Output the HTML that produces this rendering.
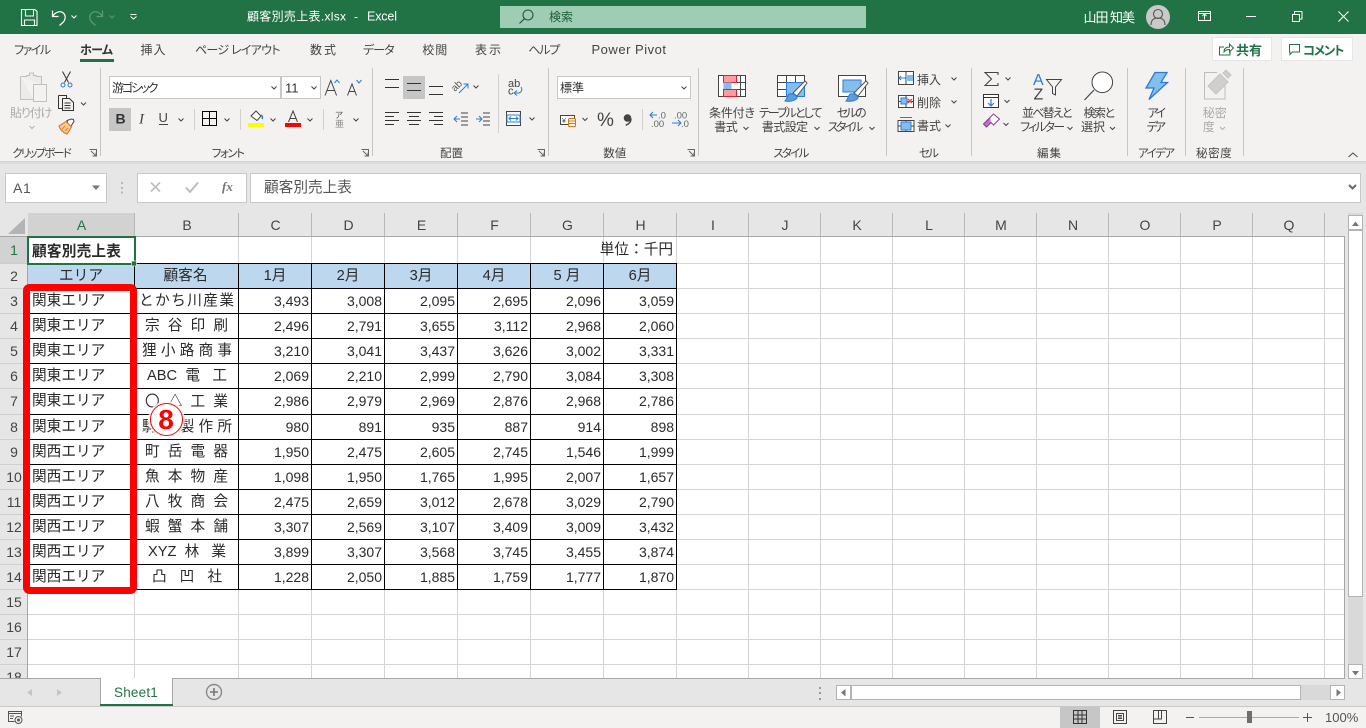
<!DOCTYPE html>
<html lang="ja"><head><meta charset="utf-8"><title>顧客別売上表.xlsx - Excel</title>
<style>
html,body{margin:0;padding:0;width:1366px;height:728px;overflow:hidden;background:#e6e6e6}
body{position:relative;font-family:"Liberation Sans","Noto Sans CJK JP",sans-serif;color:#222}
svg{position:absolute;left:0;top:0;display:block}
svg text{font-family:"Liberation Sans","Noto Sans CJK JP",sans-serif;font-size:12px;fill:#444;font-feature-settings:"palt"}
table{position:absolute;left:28px;top:237px;width:649px;border-collapse:separate;border-spacing:0;table-layout:fixed}
td{padding:0 3px 2px 4px;font-size:14px;line-height:22px;white-space:nowrap;overflow:hidden;color:#2a2a2a;text-align:right;box-sizing:border-box}
td.j{font-size:14.67px;text-align:left}
td.h{font-size:14.67px;text-align:center;padding-left:3px;padding-right:4px}
td.d{font-size:14.67px;text-align:justify;text-align-last:justify;padding-left:10px;padding-right:11px;text-justify:inter-character}
.ch{position:absolute;top:215px;height:21px;line-height:21px;text-align:center;font-size:14px;color:#444}
.rh{position:absolute;left:0;width:28px;text-align:center;font-size:14px;line-height:25px;height:25px;color:#444}
</style></head><body>

<svg width="1366" height="728" viewBox="0 0 1366 728">
<rect x="0" y="0" width="1366" height="34" fill="#217346"/>
<rect x="0" y="34" width="1366" height="127" fill="#f3f2f1"/>
<rect x="0" y="161" width="1366" height="1" fill="#d2d2d2"/>
<rect x="0" y="162" width="1366" height="2" fill="#dcdcdc"/>
<rect x="28" y="237" width="1317" height="441" fill="#fff"/>
<path d="M134.500 237V678M238.500 237V678M311.500 237V678M384.500 237V678M457.500 237V678M530.500 237V678M603.500 237V678M676.500 237V678M748.500 237V678M820.500 237V678M892.500 237V678M964.500 237V678M1036.500 237V678M1108.500 237V678M1180.500 237V678M1252.500 237V678M1324.500 237V678" stroke="#d4d4d4" fill="none"/>
<path d="M28 263.500H1345M28 288.500H1345M28 313.500H1345M28 338.500H1345M28 363.500H1345M28 388.500H1345M28 414.500H1345M28 439.500H1345M28 464.500H1345M28 489.500H1345M28 514.500H1345M28 539.500H1345M28 564.500H1345M28 589.500H1345M28 614.500H1345M28 639.500H1345M28 664.500H1345" stroke="#d4d4d4" fill="none"/>
<rect x="28" y="264" width="649" height="24" fill="#bdd7ee"/>
<path d="M134.500 263V590M238.500 263V590M311.500 263V590M384.500 263V590M457.500 263V590M530.500 263V590M603.500 263V590M676.500 263V590" stroke="#000" fill="none"/>
<path d="M134 263.500H677M28 288.500H677M28 313.500H677M28 338.500H677M28 363.500H677M28 388.500H677M28 414.500H677M28 439.500H677M28 464.500H677M28 489.500H677M28 514.500H677M28 539.500H677M28 564.500H677M28 589.500H677" stroke="#000" fill="none"/>

<!-- headers -->
<rect x="0" y="213" width="1345" height="24" fill="#e6e6e6"/>
<rect x="28" y="213" width="107" height="23" fill="#d2d2d2"/>
<rect x="0" y="237" width="28" height="441" fill="#e6e6e6"/>
<rect x="0" y="237" width="27" height="27" fill="#d2d2d2"/>
<path d="M0 236.500H1345" stroke="#a6a6a6"/>
<path d="M27.500 237V678M1344.500 237V678" stroke="#a6a6a6"/>
<path d="M8 234L25 218V234Z" fill="#b4b4b4"/>
<path d="M134.500 213V236M238.500 213V236M311.500 213V236M384.500 213V236M457.500 213V236M530.500 213V236M603.500 213V236M676.500 213V236M748.500 213V236M820.500 213V236M892.500 213V236M964.500 213V236M1036.500 213V236M1108.500 213V236M1180.500 213V236M1252.500 213V236M1324.500 213V236" stroke="#b8b8b8" fill="none"/>
<path d="M0 263.500H27M0 288.500H27M0 313.500H27M0 338.500H27M0 363.500H27M0 388.500H27M0 414.500H27M0 439.500H27M0 464.500H27M0 489.500H27M0 514.500H27M0 539.500H27M0 564.500H27M0 589.500H27M0 614.500H27M0 639.500H27M0 664.500H27" stroke="#cfcfcf" fill="none"/>

<!-- bottom bars -->
<rect x="0" y="678" width="1366" height="28" fill="#e6e6e6"/>
<path d="M0 678.500H1345" stroke="#a6a6a6"/>
<rect x="100" y="678" width="73" height="28" fill="#fff"/>
<path d="M100.500 678V704M172.500 678V704" stroke="#a6a6a6" fill="none"/>
<rect x="100" y="704" width="73" height="2" fill="#217346"/>
<rect x="0" y="706" width="1366" height="1" fill="#c8c8c8"/>
<rect x="0" y="707" width="1366" height="21" fill="#f3f2f1"/>
<rect x="1060" y="707" width="40" height="21" fill="#c6c6c6"/>

<!-- vertical scrollbar -->
<rect x="1348" y="213" width="15" height="466" fill="#d9d9d9"/>
<rect x="1348.500" y="215.500" width="14" height="14" fill="#fff" stroke="#b4b4b4"/>
<rect x="1348.500" y="230.500" width="14" height="366" fill="#fff" stroke="#b4b4b4"/>
<rect x="1348.500" y="664.500" width="14" height="14" fill="#fff" stroke="#b4b4b4"/>
<path d="M1352 226L1355.500 221.500L1359 226ZM1352 671L1355.500 675.500L1359 671Z" fill="#777"/>
<!-- horizontal scrollbar -->
<rect x="836" y="685" width="509" height="15" fill="#d9d9d9"/>
<rect x="836.500" y="685.500" width="14" height="14" fill="#fff" stroke="#b4b4b4"/>
<rect x="851.500" y="685.500" width="449" height="14" fill="#fff" stroke="#b4b4b4"/>
<rect x="1330.500" y="685.500" width="14" height="14" fill="#fff" stroke="#b4b4b4"/>
<path d="M845.500 689V696.500L841 692.500ZM1336.500 689V696.500L1341 692.500Z" fill="#777"/>
<path d="M820 687v2M820 692v2M820 698v2" stroke="#999" stroke-width="2"/>
<path d="M32 689V696L27 692.500ZM57 689V696L62 692.500Z" fill="#c4c4c4"/>
<circle cx="214" cy="692" r="7.500" fill="none" stroke="#8a8a8a" stroke-width="1.400"/>
<path d="M214 688v8M210 692h8" stroke="#777" stroke-width="1.600"/>

<!-- status bar icons -->
<path d="M8.500 711.500h13v2h-13zM8.500 713.500v8h6M21.500 713.500v3M10 716h4M10 718.500h3" fill="none" stroke="#555"/>
<circle cx="18.500" cy="720" r="3.500" fill="none" stroke="#555"/><circle cx="18.500" cy="720" r="1.500" fill="#555"/>
<path d="M1073.500 710.500h13v13h-13zM1078 710.500v13M1082 710.500v13M1073.500 715h13M1073.500 719h13" fill="none" stroke="#333"/>
<path d="M1113.500 710.500h13v13h-13zM1116.500 713.500h7v7h-7zM1118 715.500h4M1118 717h4M1118 718.500h4" fill="none" stroke="#444"/>
<path d="M1153.500 710.500h13v13h-13zM1153.500 719h8v-8.500" fill="none" stroke="#444"/><path d="M1158.500 710.500v8" stroke="#444"/>
<path d="M1186 717.500h8M1303 717.500h9M1307.500 713v9" stroke="#555" fill="none"/>
<path d="M1199 717.500h100" stroke="#aaa"/>
<rect x="1247" y="711" width="5" height="12" fill="#6f6f6f"/>

<!-- formula bar -->
<rect x="5.500" y="173.500" width="101" height="29" fill="#fff" stroke="#c8c8c8"/>
<path d="M92 185.500h8l-4 4.500z" fill="#777"/>
<path d="M122 182v2M122 187v2M122 191.500v2" stroke="#aaa" stroke-width="1.500"/>
<rect x="137.500" y="173.500" width="109" height="29" fill="#fff" stroke="#c8c8c8"/>
<rect x="250.500" y="173.500" width="1110" height="29" fill="#fff" stroke="#c8c8c8"/>
<path d="M151 182.500l9 9M160 182.500l-9 9" stroke="#bdbdbd" stroke-width="1.600" fill="none"/>
<path d="M186 187.500l4 4.500l8-9.500" stroke="#bdbdbd" stroke-width="2" fill="none"/>
<text x="222" y="191" style="font-family:'Liberation Serif',serif;font-style:italic;font-weight:bold;font-size:13px;fill:#777">fx</text>
<path d="M1349 185l3.500 3.500l3.500-3.500" stroke="#666" stroke-width="2" fill="none"/>
<text x="13" y="193" style="font-size:14px;fill:#555;letter-spacing:.6px">A1</text>
<text x="264" y="192" style="font-size:14.67px;fill:#555;font-feature-settings:normal">顧客別売上表</text>

<!-- Title bar -->
<path d="M21.500 9.500h13.500l2 2v14h-15.500zM25.500 9.500v6.500h8v-6.500M24.500 25.500v-5.500h10v5.500" fill="none" stroke="#fff" stroke-width="1.100"/>
<path d="M52.500 10.500v6h6M52.800 16c3-4.500 8-5.500 10.700-2.800c3 3 1.500 7.300-.7 9.300l-3.300 3" fill="none" stroke="#fff" stroke-width="1.200"/>
<path d="M71.500 15.500l2.500 2.500l2.500-2.500" fill="none" stroke="#fff"/>
<path d="M102.500 10.500v6h-6M102.200 16c-3-4.500-8-5.500-10.700-2.800c-3 3-1.500 7.300.7 9.300l3.300 3" fill="none" stroke="#5f9a78" stroke-width="1.200"/>
<path d="M109.500 15.500l2.500 2.500l2.500-2.500" fill="none" stroke="#5f9a78"/>
<path d="M130.500 14.500h6M130.500 16.500l3 2.500l3-2.500" fill="none" stroke="#fff"/>
<text x="247" y="20.500" style="fill:#fff;font-feature-settings:normal" textLength="99">顧客別売上表.xlsx</text>
<text x="354" y="20.500" style="fill:#fff">-</text>
<text x="367" y="20.500" style="fill:#fff;font-size:12.500px" textLength="30">Excel</text>
<rect x="500" y="6" width="366" height="22" fill="#9fcdb3"/>
<circle cx="528" cy="15" r="5" fill="none" stroke="#1d5c3b" stroke-width="1.100"/>
<path d="M524.300 18.800l-4.800 4.700" stroke="#1d5c3b" stroke-width="1.200"/>
<text x="549" y="21" style="fill:#1d5c3b;font-feature-settings:normal">検索</text>
<text x="1083.500" y="22" style="fill:#fff;font-size:13px;font-feature-settings:normal" textLength="51.500">山田 知美</text>
<circle cx="1158" cy="17" r="12" fill="#c9c9c9"/>
<circle cx="1158" cy="14" r="4.500" fill="none" stroke="#555" stroke-width="1.100"/>
<path d="M1151 25c0-5 3-7 7-7s7 2 7 7" fill="none" stroke="#555" stroke-width="1.100"/>
<path d="M1198.500 11.500h12v9h-12zM1198.500 13.500h12M1204.500 19.500v-5M1202.500 16l2-2l2 2" fill="none" stroke="#fff"/>
<path d="M1246 16.500h10" stroke="#fff"/>
<path d="M1292.500 14.500h7v7h-7zM1294.500 14v-2.500h7.500v7.500h-2.500" fill="none" stroke="#fff"/>
<path d="M1338.500 11.500l10 10M1348.500 11.500l-10 10" stroke="#fff" fill="none" stroke-width="1.100"/>

<!-- tabs -->
<text x="14" y="54" textLength="37">ファイル</text>
<text x="80" y="54" style="font-weight:bold;fill:#333" textLength="33">ホーム</text>
<rect x="80" y="59" width="34" height="3" fill="#217346"/>
<text x="140.500" y="54" textLength="25">挿入</text>
<text x="195" y="54" textLength="85.500">ページ レイアウト</text>
<text x="310" y="54" textLength="26">数式</text>
<text x="363" y="54" textLength="31.500">データ</text>
<text x="422.300" y="54" textLength="25">校閲</text>
<text x="475" y="54" textLength="26">表示</text>
<text x="528.300" y="54" textLength="32">ヘルプ</text>
<text x="591.500" y="54" style="font-size:13px" textLength="74.500">Power Pivot</text>
<rect x="1212.500" y="37.500" width="59" height="23" fill="#fff" stroke="#e6e6e6"/>
<path d="M1224 47h-4.500v8h10.500v-3" fill="none" stroke="#217346"/>
<path d="M1224 52c0-3.500 2-5 5.500-5v-3l4 4l-4 4v-2.500c-2.500 0-4 .5-5.500 2.500z" fill="none" stroke="#217346"/>
<text x="1236" y="55" style="font-weight:bold;font-size:13px;fill:#217346;font-feature-settings:normal">共有</text>
<rect x="1281.500" y="37.500" width="71" height="23" fill="#fff" stroke="#e6e6e6"/>
<path d="M1289.500 44.500h10v7.500h-7l-2.500 2.500v-2.500h-.5z" fill="none" stroke="#217346"/>
<text x="1303" y="55" style="font-weight:bold;font-size:12.500px;fill:#217346" textLength="41.500">コメント</text>

<!-- dividers -->
<path d="M100.500 68V156M372.500 68V156M548.500 68V156M698.500 68V156M886.500 68V156M971.500 68V156M1127.500 68V156M1185.500 68V156M1243.500 68V156" stroke="#c6c6c6" fill="none"/>
<path d="M194.500 109V130M240.500 109V130M323.500 109V130M498.500 74V133M642.500 109V130" stroke="#d0d0d0" fill="none"/>

<!-- clipboard -->
<path d="M20.500 76.500h6v-1h3v-2.500h4v2.500h3v1h5v8" fill="#ebebeb" stroke="#c0c0c0"/>
<path d="M20.500 76.500v23h13" fill="#ebebeb" stroke="#c0c0c0"/>
<rect x="33.500" y="84.500" width="13" height="17" fill="#f3f2f1" stroke="#c0c0c0"/>
<text x="10" y="117" style="fill:#ababab" textLength="42.300">貼り付け</text>
<path d="M29.500 126l2.500 2.500l2.500-2.500" stroke="#b0b0b0" fill="none"/>
<path d="M62.500 71.500l6 11M70.500 71.500l-6 11" stroke="#333" fill="none"/>
<circle cx="63" cy="85" r="2" fill="none" stroke="#2b7cd3"/><circle cx="70" cy="85" r="2" fill="none" stroke="#2b7cd3"/>
<path d="M58.500 95.500h8v3M58.500 95.500v13h4" fill="none" stroke="#333"/>
<path d="M62.500 98.500h7l4 4v8h-11zM64.500 103h6M64.500 105.500h6M64.500 108h6" fill="none" stroke="#333"/>
<path d="M81 102.500l2.500 2.500l2.500-2.500" stroke="#444" fill="none"/>
<path d="M67 120.500l4.500-1.500l2 .5l.5 2l-3 4.500l-2 .5z" fill="#fff" stroke="#444"/>
<path d="M59 126l7-4.500l5.500 5.500l-4.500 7c-3-1-7-4-8-8z" fill="#f7c9a0" stroke="#e67e22" stroke-width="1.200"/>
<path d="M62 129l3-3M65 131l3-3" stroke="#e67e22" fill="none"/>
<text x="12.300" y="157" style="font-size:11.500px" textLength="59.500">クリップボード</text>
<path d="M89.500 149.500h7v7M91 151l5 5M96 152.500v3.500h-3.500" stroke="#666" fill="none"/>

<!-- font group -->
<rect x="109.500" y="76.500" width="171" height="22" fill="#fff" stroke="#c6c6c6"/>
<rect x="281.500" y="76.500" width="39" height="22" fill="#fff" stroke="#c6c6c6"/>
<text x="112" y="92" style="fill:#333" textLength="46.500">游ゴシック</text>
<text x="285" y="92.500" style="fill:#333;font-size:13px">11</text>
<path d="M271.500 86.500l2.500 2.500l2.500-2.500M311.500 86.500l2.500 2.500l2.500-2.500" stroke="#444" fill="none"/>
<path d="M325 95.500l5.800-15l5.800 15M327 90.500h7.500" fill="none" stroke="#444"/>
<path d="M334.500 83l2.500-3l2.500 3" fill="none" stroke="#2b7cd3"/>
<path d="M347.500 95.500l4.500-11.500l4.500 11.500M349 91.500h6" fill="none" stroke="#444"/>
<path d="M356.500 80l2.500 3l2.500-3" fill="none" stroke="#2b7cd3"/>
<rect x="109" y="108" width="22" height="23" fill="#c6c6c6"/>
<text x="115.500" y="123.500" style="font-weight:bold;font-size:14px;fill:#333">B</text>
<text x="139" y="123.500" style="font-style:italic;font-family:'Liberation Serif',serif;font-size:15px;fill:#444">I</text>
<text x="158.500" y="122" style="font-size:13px;fill:#444">U</text>
<path d="M159 124.500h9" stroke="#444"/>
<path d="M178.500 118.500l2.500 2.500l2.500-2.500M224.500 118.500l2.500 2.500l2.500-2.500M270.500 118.500l2.500 2.500l2.500-2.500M307.500 118.500l2.500 2.500l2.500-2.500M353.500 118.500l2.500 2.500l2.500-2.500" stroke="#444" fill="none"/>
<path d="M202.500 111.500h14v14h-14zM209.500 111.500v14M202.500 118.500h14" fill="none" stroke="#000"/>
<path d="M251 116l5-5l5 5l-4 4.500z" fill="#fff" stroke="#444"/>
<path d="M261 115c1.500 1 2 2.500 1 4" fill="none" stroke="#2b7cd3" stroke-width="1.500"/>
<rect x="248" y="123" width="16" height="4" fill="#ff0"/>
<path d="M288.500 122l4.500-11l4.500 11M290 118.500h6" fill="none" stroke="#444"/>
<rect x="285" y="123" width="16" height="4" fill="#f00"/>
<text x="335" y="118" style="font-size:8.500px;fill:#555">ア</text>
<text x="335" y="127" style="font-size:9px;fill:#888;font-feature-settings:normal">亜</text>
<text x="211.700" y="157" style="font-size:11.500px" textLength="33.300">フォント</text>
<path d="M361.500 149.500h7v7M363 151l5 5M368 152.500v3.500h-3.500" stroke="#666" fill="none"/>

<!-- alignment -->
<rect x="403" y="76" width="22" height="23" fill="#c6c6c6"/>
<path d="M385 79.500h14M385 87.500h14M407 83.500h14M407 90.500h14M429 86.500h14M429 94.500h14" stroke="#333" fill="none"/>
<text x="0" y="0" transform="translate(455 92) rotate(-45)" style="font-size:10px;fill:#555">ab</text>
<path d="M459 93l9-9M468 88.500v-4.500h-4.500" stroke="#2b7cd3" fill="none"/>
<path d="M473.500 85.500l2.500 2.500l2.500-2.500" stroke="#444" fill="none"/>
<path d="M385 112.500h14M385 116.500h9M385 120.500h14M385 124.500h9M407 112.500h14M409 116.500h10M407 120.500h14M409 124.500h10M429 112.500h14M434 116.500h9M429 120.500h14M434 124.500h9" stroke="#333" fill="none"/>
<path d="M461 113h7M461 117h7M461 121h7M461 125h7M483 113h7M483 117h7M483 121h7M483 125h7" stroke="#444" fill="none"/>
<path d="M454 119h6M457 116l-3 3l3 3M476 119h6M479 116l3 3l-3 3" stroke="#2b7cd3" fill="none"/>
<text x="508" y="87" style="font-size:11px">ab</text>
<text x="508" y="94.500" style="font-size:11px">c</text>
<path d="M521 87c2 3 0 6-3 6h-4M517 90.500l-3 2.500l3 2.500" stroke="#2b7cd3" fill="none"/>
<rect x="506.500" y="111.500" width="14" height="14" fill="#fff" stroke="#444"/>
<rect x="507" y="115" width="13" height="7" fill="#fff" stroke="#2b7cd3"/>
<path d="M509 118.500h9M511 116.500l-2 2l2 2M516 116.500l2 2l-2 2" stroke="#2b7cd3" fill="none"/>
<path d="M529.500 117.500l2.500 2.500l2.500-2.500" stroke="#444" fill="none"/>
<text x="440" y="157" style="font-size:11.500px">配置</text>
<path d="M537.500 149.500h7v7M539 151l5 5M544 152.500v3.500h-3.500" stroke="#666" fill="none"/>

<!-- number -->
<rect x="557.500" y="76.500" width="133" height="22" fill="#fff" stroke="#c6c6c6"/>
<text x="560" y="92" style="fill:#333">標準</text>
<path d="M681.500 86.500l2.500 2.500l2.500-2.500M582.500 118l2.500 2.500l2.500-2.500" stroke="#444" fill="none"/>
<rect x="560.500" y="115.500" width="14" height="9" fill="#fff" stroke="#444"/>
<text x="562" y="123" style="font-size:7px">¥</text>
<rect x="568.500" y="118.500" width="7" height="8" rx="1" fill="#fff" stroke="#d9730d"/>
<path d="M568.500 121h7M568.500 123.500h7" stroke="#d9730d"/>
<text x="597" y="126" style="font-size:19px;fill:#444">%</text>
<circle cx="627.500" cy="118" r="3.800" fill="#444"/>
<path d="M630.800 118.500c.4 3-1.800 5.500-5 6.700" fill="none" stroke="#444" stroke-width="1.600"/>
<path d="M657 115h-7M653 112l-3 3l3 3" stroke="#2b7cd3" fill="none"/>
<text x="651" y="127" style="font-size:9.500px;fill:#666">.00</text>
<text x="658" y="118.500" style="font-size:9.500px;fill:#666">.0</text>
<text x="674" y="118.500" style="font-size:9.500px;fill:#666">.00</text>
<path d="M672 123h9M678 120l3 3l-3 3" stroke="#2b7cd3" fill="none"/>
<text x="681" y="127" style="font-size:9.500px;fill:#666">.0</text>
<text x="603.300" y="157" style="font-size:11.500px">数値</text>
<path d="M687.500 149.500h7v7M689 151l5 5M694 152.500v3.500h-3.500" stroke="#666" fill="none"/>

<!-- styles -->
<rect x="718.500" y="75.500" width="27" height="21" fill="#fff" stroke="#444"/>
<rect x="723.500" y="75.500" width="13" height="7" fill="#ff9b9e" stroke="#d9232c"/>
<rect x="723.500" y="82.500" width="8" height="7" fill="#83beec"/>
<rect x="723.500" y="89.500" width="13" height="7" fill="#ff9b9e" stroke="#d9232c"/>
<path d="M737 82.500h9M737 89.500h9M740.500 75.500v21" stroke="#444" fill="none"/>
<rect x="777.500" y="75.500" width="27" height="21" fill="#fff" stroke="#444"/>
<path d="M777.500 82.500h27M777.500 89.500h27M786.500 75.500v21M795.500 75.500v21" stroke="#444" fill="none"/>
<rect x="786.500" y="82.500" width="18" height="14" fill="#83beec" stroke="#2b7cd3"/>
<path d="M793 93L805 81l2 2L797 96z" fill="#fff" stroke="#555"/>
<path d="M789 94c3-1 8 1 8 4c-2 3-8 4-12 3c2-2 2-5 4-7z" fill="#5a9fdc" stroke="#2b7cd3"/>
<rect x="838.500" y="75.500" width="27" height="21" fill="#fff" stroke="#444"/>
<rect x="843" y="80" width="18" height="12" fill="#83beec" stroke="#2b7cd3"/>
<path d="M854 93L866 81l2 2L858 96z" fill="#fff" stroke="#555"/>
<path d="M850 94c3-1 8 1 8 4c-2 3-8 4-12 3c2-2 2-5 4-7z" fill="#5a9fdc" stroke="#2b7cd3"/>
<text x="709" y="117" textLength="46">条件付き</text>
<text x="714.300" y="131" textLength="23.500">書式</text>
<path d="M743.500 127l2.500 2.500l2.500-2.500" stroke="#444" fill="none"/>
<text x="759" y="117" textLength="63.500">テーブルとして</text>
<text x="761.700" y="131" textLength="46.500">書式設定</text>
<path d="M814.500 127l2.500 2.500l2.500-2.500" stroke="#444" fill="none"/>
<text x="836.700" y="117" textLength="30">セルの</text>
<text x="827.700" y="131" textLength="35.500">スタイル</text>
<path d="M869.500 127l2.500 2.500l2.500-2.500" stroke="#444" fill="none"/>
<text x="773.300" y="157" style="font-size:11.500px" textLength="36">スタイル</text>

<!-- cells -->
<path d="M898.500 71.500h15v13h-15zM898.500 78h15M906 71.500v13" fill="#fff" stroke="#444"/>
<rect x="906" y="75" width="7" height="6" fill="#83beec"/>
<path d="M899 78h6M901 76l-2 2l2 2" stroke="#2b7cd3" fill="none"/>
<path d="M898.500 95.500h15v12h-15zM898.500 101.500h15M906 95.500v12" fill="#fff" stroke="#444"/>
<rect x="901" y="98" width="6" height="6" fill="#83beec" stroke="#2b7cd3"/>
<path d="M908 99l4 4M912 99l-4 4" stroke="#e8474a" stroke-width="1.300"/>
<path d="M898 120.500h16v11h-16zM898 126h16M906 120.500v11" fill="#fff" stroke="#444"/>
<rect x="901" y="122" width="10" height="8" fill="#83beec" stroke="#2b7cd3"/>
<path d="M900 117.500h12" stroke="#2b7cd3"/>
<text x="917" y="84" style="font-feature-settings:normal">挿入</text>
<text x="917" y="107" style="font-feature-settings:normal">削除</text>
<text x="917" y="130" style="font-feature-settings:normal">書式</text>
<path d="M951.500 77.500l2.500 2.500l2.500-2.500M951.500 100.500l2.500 2.500l2.500-2.500M945.500 124.500l2.500 2.500l2.500-2.500" stroke="#444" fill="none"/>
<text x="919" y="157" style="font-size:11.500px" textLength="20">セル</text>

<!-- editing -->
<path d="M998 75v-2.500h-13l6.500 6.500l-6.500 6.500h13v-2.500" fill="none" stroke="#444" stroke-width="1.100"/>
<path d="M1005.500 77.500l2.500 2.500l2.500-2.500M1004.500 100l2.500 2.500l2.500-2.500M1003.500 123l2.500 2.500l2.500-2.500" stroke="#444" fill="none"/>
<rect x="983.500" y="94.500" width="15" height="13" fill="#fff" stroke="#333"/>
<path d="M983.500 97.500h15" stroke="#333"/>
<path d="M991 99v7M988 103l3 3l3-3" stroke="#2b7cd3" fill="none" stroke-width="1.200"/>
<path d="M983.500 124l7-7l3 3l-7 7z" fill="#c46fc9" stroke="#8b3a91"/>
<path d="M990.500 117l3-3l6 5l-6 6l-3-3" fill="#fff" stroke="#8b3a91"/>
<text x="1033" y="85" style="font-size:16px;fill:#2b7cd3">A</text>
<text x="1033.500" y="99.500" style="font-size:16px;fill:#444">Z</text>
<path d="M1046.500 79.500h15l-6 7.500v8l-3-1.500v-6.500z" fill="none" stroke="#444"/>
<text x="1022" y="117" textLength="50.500">並べ替えと</text>
<text x="1020" y="131" textLength="45">フィルター</text>
<path d="M1067.500 127l2.500 2.500l2.500-2.500" stroke="#444" fill="none"/>
<circle cx="1102.300" cy="82.300" r="10.300" fill="#fff" stroke="#444"/>
<path d="M1094 90l-9.500 10" stroke="#444" stroke-width="1.200"/>
<text x="1083.500" y="117" textLength="31.500">検索と</text>
<text x="1081" y="131" textLength="24">選択</text>
<path d="M1110 127l2.500 2.500l2.500-2.500" stroke="#444" fill="none"/>
<text x="1037" y="157" style="font-size:11.500px" textLength="24">編集</text>

<!-- ideas -->
<path d="M1155 72.500h12l-6 10h6.500l-18.500 17l5-11.500h-8z" fill="#83beec" stroke="#2b7cd3" stroke-width="1.300"/>
<text x="1147.500" y="117" textLength="18.500">アイ</text>
<text x="1146.700" y="131" textLength="19.300">デア</text>
<text x="1138" y="157" style="font-size:11.500px" textLength="37">アイデア</text>

<!-- sensitivity -->
<path d="M1217 72.500h-12.500v26.500h20.500v-14" fill="none" stroke="#bcbcbc"/>
<path d="M1208 86l12-12l8 8l-12 12z" fill="#cfcfcf" stroke="#c4c4c4"/>
<path d="M1223 73l3-3l5 5l-3 3z" fill="#cfcfcf" stroke="#c4c4c4"/>
<text x="1202.700" y="117" style="fill:#ababab;font-feature-settings:normal">秘密</text>
<text x="1202.700" y="131" style="fill:#ababab;font-feature-settings:normal">度</text>
<path d="M1220 127l2.500 2.500l2.500-2.500" stroke="#b0b0b0" fill="none"/>
<text x="1196" y="157" style="font-size:11.500px;font-feature-settings:normal" textLength="35.700">秘密度</text>
<path d="M1348.500 157l4.500-4l4.500 4" stroke="#555" stroke-width="1.100" fill="none"/>

<text x="114" y="697" style="font-size:13.500px;fill:#217346;letter-spacing:.2px">Sheet1</text>
<text x="1325" y="722" style="font-size:13px;fill:#555">100%</text>
</svg>

<div class="ch" style="left:28px;width:107px;color:#217346">A</div>
<div class="ch" style="left:135px;width:104px">B</div>
<div class="ch" style="left:239px;width:73px">C</div>
<div class="ch" style="left:312px;width:73px">D</div>
<div class="ch" style="left:385px;width:73px">E</div>
<div class="ch" style="left:458px;width:73px">F</div>
<div class="ch" style="left:531px;width:73px">G</div>
<div class="ch" style="left:604px;width:73px">H</div>
<div class="ch" style="left:677px;width:72px">I</div>
<div class="ch" style="left:749px;width:72px">J</div>
<div class="ch" style="left:821px;width:72px">K</div>
<div class="ch" style="left:893px;width:72px">L</div>
<div class="ch" style="left:965px;width:72px">M</div>
<div class="ch" style="left:1037px;width:72px">N</div>
<div class="ch" style="left:1109px;width:72px">O</div>
<div class="ch" style="left:1181px;width:72px">P</div>
<div class="ch" style="left:1253px;width:72px">Q</div>

<div class="rh" style="top:238px;color:#217346">1</div>
<div class="rh" style="top:264px">2</div>
<div class="rh" style="top:289px">3</div>
<div class="rh" style="top:314px">4</div>
<div class="rh" style="top:339px">5</div>
<div class="rh" style="top:364px">6</div>
<div class="rh" style="top:389px">7</div>
<div class="rh" style="top:415px">8</div>
<div class="rh" style="top:440px">9</div>
<div class="rh" style="top:465px">10</div>
<div class="rh" style="top:490px">11</div>
<div class="rh" style="top:515px">12</div>
<div class="rh" style="top:540px">13</div>
<div class="rh" style="top:565px">14</div>
<div class="rh" style="top:590px">15</div>
<div class="rh" style="top:615px">16</div>
<div class="rh" style="top:640px">17</div>
<div class="rh" style="top:665px;height:13px;overflow:hidden">18</div>

<table>
<colgroup><col style="width:107px"><col style="width:104px"><col style="width:73px"><col style="width:73px"><col style="width:73px"><col style="width:73px"><col style="width:73px"><col style="width:73px"></colgroup>
<tr style="height:27px"><td class="j" style="font-weight:bold;overflow:visible;padding-top:2px;padding-bottom:0;letter-spacing:.2px">顧客別売上表</td><td></td><td></td><td></td><td></td><td></td><td colspan="2" class="j" style="text-align:right;padding-bottom:1px;padding-right:4px">単位：千円</td></tr>
<tr style="height:25px"><td class="h">エリア</td><td class="h" style="padding-right:6px">顧客名</td><td class="h">1月</td><td class="h">2月</td><td class="h">3月</td><td class="h">4月</td><td class="h">5 月</td><td class="h">6月</td></tr>
<tr style="height:25px"><td class="j">関東エリア</td><td class="d" style="padding-left:4px;padding-right:5px">とかち川産業</td><td>3,493</td><td>3,008</td><td>2,095</td><td>2,695</td><td>2,096</td><td>3,059</td></tr>
<tr style="height:25px"><td class="j">関東エリア</td><td class="d">宗谷印刷</td><td>2,496</td><td>2,791</td><td>3,655</td><td>3,112</td><td>2,968</td><td>2,060</td></tr>
<tr style="height:25px"><td class="j">関東エリア</td><td class="d" style="padding-left:7px;padding-right:7px">狸小路商事</td><td>3,210</td><td>3,041</td><td>3,437</td><td>3,626</td><td>3,002</td><td>3,331</td></tr>
<tr style="height:25px"><td class="j">関東エリア</td><td class="d" style="padding-left:12px;padding-right:12px">ABC 電 工</td><td>2,069</td><td>2,210</td><td>2,999</td><td>2,790</td><td>3,084</td><td>3,308</td></tr>
<tr style="height:26px"><td class="j">関東エリア</td><td class="d" style="font-family:'Noto Sans CJK JP',sans-serif">〇△工業</td><td>2,986</td><td>2,979</td><td>2,969</td><td>2,876</td><td>2,968</td><td>2,786</td></tr>
<tr style="height:25px"><td class="j">関東エリア</td><td class="d" style="padding-left:7px;padding-right:7px">駒奥製作所</td><td>980</td><td>891</td><td>935</td><td>887</td><td>914</td><td>898</td></tr>
<tr style="height:25px"><td class="j">関西エリア</td><td class="d">町岳電器</td><td>1,950</td><td>2,475</td><td>2,605</td><td>2,745</td><td>1,546</td><td>1,999</td></tr>
<tr style="height:25px"><td class="j">関西エリア</td><td class="d">魚本物産</td><td>1,098</td><td>1,950</td><td>1,765</td><td>1,995</td><td>2,007</td><td>1,657</td></tr>
<tr style="height:25px"><td class="j">関西エリア</td><td class="d">八牧商会</td><td>2,475</td><td>2,659</td><td>3,012</td><td>2,678</td><td>3,029</td><td>2,790</td></tr>
<tr style="height:25px"><td class="j">関西エリア</td><td class="d">蝦蟹本舗</td><td>3,307</td><td>2,569</td><td>3,107</td><td>3,409</td><td>3,009</td><td>3,432</td></tr>
<tr style="height:25px"><td class="j">関西エリア</td><td class="d" style="padding-left:13px;padding-right:13px">XYZ 林 業</td><td>3,899</td><td>3,307</td><td>3,568</td><td>3,745</td><td>3,455</td><td>3,874</td></tr>
<tr style="height:25px"><td class="j">関西エリア</td><td class="d" style="padding-left:17px;padding-right:17px">凸凹社</td><td>1,228</td><td>2,050</td><td>1,885</td><td>1,759</td><td>1,777</td><td>1,870</td></tr>
</table>

<svg width="1366" height="728" viewBox="0 0 1366 728" style="pointer-events:none">
<rect x="28" y="237" width="107" height="27" fill="none" stroke="#217346" stroke-width="2"/>
<rect x="131.500" y="261" width="5" height="5" fill="#217346" stroke="#fff" stroke-width=".6"/>
<rect x="26.500" y="287.500" width="107" height="303" rx="3" fill="none" stroke="#f00" stroke-width="7"/>
<circle cx="166.500" cy="419.500" r="18.500" fill="#fff" fill-opacity=".8"/>
<circle cx="166.500" cy="419.500" r="16" fill="#fff" fill-opacity=".8" stroke="#f00" stroke-width="1"/>
<text x="166" y="429" text-anchor="middle" style="font-size:28px;font-weight:bold;fill:#f00;font-feature-settings:normal">8</text>
</svg>
</body></html>
